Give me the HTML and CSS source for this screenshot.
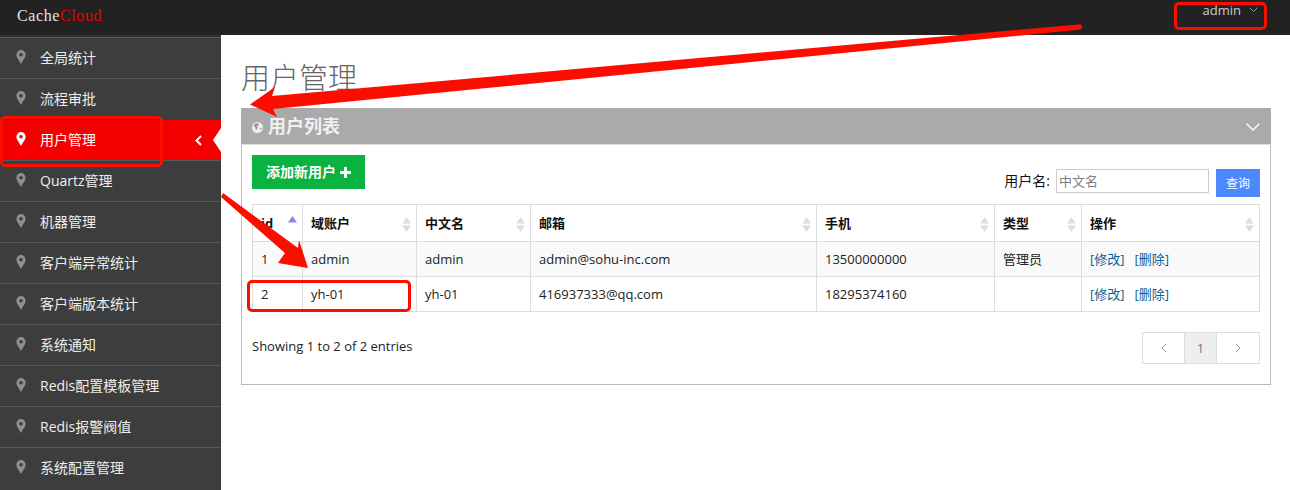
FILE: index.html
```html
<!DOCTYPE html>
<html lang="zh">
<head>
<meta charset="utf-8">
<title>CacheCloud</title>
<link rel="stylesheet" href="styles.css">
</head>
<body>
<svg width="0" height="0" class="defs"><defs>
  <symbol id="pin" viewBox="0 0 10 14"><path fill-rule="evenodd" d="M5 0a4.6 4.6 0 0 0-4.6 4.7C.4 7.6 3.6 11 5 14c1.400-3 4.600-6.400 4.600-9.300A4.600 4.600 0 0 0 5 0zm0 3a1.800 1.800 0 1 1 0 3.600A1.800 1.800 0 0 1 5 3z"/></symbol>
  <symbol id="sort" viewBox="0 0 9 15"><path d="M4.500 0 9 6.500H0zM4.500 15 0 8.500h9z"/></symbol>
</defs></svg>
<header class="topbar">
  <div class="logo">Cache<span class="logo-red">Cloud</span></div>
  <div class="user">admin <svg class="user-caret" width="9" height="6" viewBox="0 0 9 6"><path d="M.7.7 4.500 4.500 8.300.7" fill="none" stroke="#999" stroke-width="1"/></svg></div>
</header>
<div class="layout">
  <nav class="sidebar">
    <a class="nav-item"><svg class="pin"><use href="#pin"/></svg>全局统计</a>
    <a class="nav-item"><svg class="pin"><use href="#pin"/></svg>流程审批</a>
    <a class="nav-item active"><svg class="pin"><use href="#pin"/></svg>用户管理<svg class="nav-chev" width="7" height="11" viewBox="0 0 7 11"><path d="M6 1 1.500 5.500 6 10" fill="none" stroke="#fff" stroke-width="2"/></svg><span class="notch"></span></a>
    <a class="nav-item"><svg class="pin"><use href="#pin"/></svg>Quartz管理</a>
    <a class="nav-item"><svg class="pin"><use href="#pin"/></svg>机器管理</a>
    <a class="nav-item"><svg class="pin"><use href="#pin"/></svg>客户端异常统计</a>
    <a class="nav-item"><svg class="pin"><use href="#pin"/></svg>客户端版本统计</a>
    <a class="nav-item"><svg class="pin"><use href="#pin"/></svg>系统通知</a>
    <a class="nav-item"><svg class="pin"><use href="#pin"/></svg>Redis配置模板管理</a>
    <a class="nav-item"><svg class="pin"><use href="#pin"/></svg>Redis报警阀值</a>
    <a class="nav-item"><svg class="pin"><use href="#pin"/></svg>系统配置管理</a>
  </nav>
  <main class="content">
    <h1 class="page-title">用户管理</h1>
    <section class="panel">
      <div class="panel-head">
        <svg class="globe" width="11" height="11" viewBox="0 0 11 11"><circle cx="5.500" cy="5.500" r="5.500" fill="#eee"/><path d="M3 1.500 6 1l1 2-2 1 1 2-2 2-1-3-1.500-1zM8 6l2-.5-1.500 3z" fill="#9a9a9a"/></svg>
        <span class="panel-title">用户列表</span>
        <svg class="panel-chev" width="14" height="8" viewBox="0 0 14 8"><path d="M.7.7 7 7 13.300.7" fill="none" stroke="#fff" stroke-width="1.300"/></svg>
      </div>
      <div class="panel-body">
        <div class="toolbar">
          <a class="btn-add">添加新用户 <svg width="11" height="11" viewBox="0 0 11 11"><path d="M4 0h3v4h4v3H7v4H4V7H0V4h4z" fill="#fff"/></svg></a>
          <form class="search">
            <label class="search-label">用户名:</label>
            <input class="search-input" placeholder="中文名">
            <button class="search-btn" type="button">查询</button>
          </form>
        </div>
        <table class="grid">
          <colgroup>
            <col class="c1"><col class="c2"><col class="c3"><col class="c4"><col class="c5"><col class="c6"><col class="c7">
          </colgroup>
          <thead>
            <tr>
              <th>id<svg class="sort-up" width="9" height="7" viewBox="0 0 9 7"><path d="M4.500 0 9 6.500H0z"/></svg></th>
              <th>域账户<svg class="sort"><use href="#sort"/></svg></th>
              <th>中文名<svg class="sort"><use href="#sort"/></svg></th>
              <th>邮箱<svg class="sort"><use href="#sort"/></svg></th>
              <th>手机<svg class="sort"><use href="#sort"/></svg></th>
              <th>类型<svg class="sort"><use href="#sort"/></svg></th>
              <th>操作<svg class="sort"><use href="#sort"/></svg></th>
            </tr>
          </thead>
          <tbody>
            <tr class="odd">
              <td>1</td><td>admin</td><td>admin</td><td>admin@sohu-inc.com</td><td>13500000000</td><td>管理员</td>
              <td><a class="link">[修改]</a><a class="link">[删除]</a></td>
            </tr>
            <tr>
              <td>2</td><td>yh-01</td><td>yh-01</td><td>416937333@qq.com</td><td>18295374160</td><td></td>
              <td><a class="link">[修改]</a><a class="link">[删除]</a></td>
            </tr>
          </tbody>
        </table>
        <div class="footer-row">
          <div class="info">Showing 1 to 2 of 2 entries</div>
          <div class="pager">
            <span class="pg pg-edge pg-first"><svg width="6" height="10" viewBox="0 0 6 10"><path d="M5 1 1 5l4 4" fill="none" stroke="#999"/></svg></span>
            <span class="pg pg-cur">1</span>
            <span class="pg pg-edge"><svg width="6" height="10" viewBox="0 0 6 10"><path d="M1 1l4 4-4 4" fill="none" stroke="#999"/></svg></span>
          </div>
        </div>
      </div>
    </section>
  </main>
</div>
<div class="mark mark-nav"></div>
<div class="mark mark-row"></div>
<div class="mark mark-user"></div>
<svg class="arrows" width="1290" height="490" viewBox="0 0 1290 490">
  <path d="M1078 24.500 1081 24.500Q1083 27 1081 29.500L273 109 277 117 250 104.500 275 87 272 96z" fill="#fb0d00"/>
  <path d="M223 193 298 248 299 240 308 268 278 263 285 253 221 197z" fill="#fb0d00"/>
</svg>
</body>
</html>
```
FILE: styles.css
```css
* { box-sizing: border-box; }
html, body { margin: 0; padding: 0; }
body {
  width: 1290px;
  height: 490px;
  overflow: hidden;
  position: relative;
  background: #fff;
  color: #111;
  font: 13px/18px "Open Sans", "Noto Sans CJK SC", sans-serif;
}
.defs { position: absolute; }

.topbar {
  height: 35px;
  background: #222;
  display: flex;
  justify-content: space-between;
  padding: 5px 32px 0 17px;
}
.logo {
  font: 16px/21px "Liberation Serif", serif;
  letter-spacing: .6px;
  color: #e4e4e4;
}
.logo-red { color: #e60000; }
.user {
  color: #ccc;
  font-size: 13px;
  line-height: 10px;
  display: flex;
  gap: 8px;
  align-items: flex-start;
}
.user-caret { margin-top: 2px; }

.layout { display: flex; height: 455px; }
.sidebar {
  width: 221px;
  flex: none;
  background: #3d3d3d;
  padding-top: 2px;
  box-shadow: inset 0 2px 0 #333;
}
.nav-item {
  position: relative;
  height: 41px;
  display: flex;
  align-items: center;
  border-top: 1px solid #595959;
  padding: 0 0 0 16px;
  color: #eee;
  font-size: 14px;
}
.pin {
  width: 10px;
  height: 14px;
  margin-right: 14px;
  margin-top: -3px;
  fill: #8f8f8f;
}
.nav-item.active {
  background: #f50000;
  color: #fff;
  border-top-color: #3d3d3d;
}
.nav-item.active .pin { fill: #fff; }
.nav-chev { position: absolute; left: 195px; top: 15px; }
.notch {
  position: absolute;
  right: 0;
  top: 8px;
  border: 12px solid transparent;
  border-left: 0;
  border-right: 8px solid #fff;
}

.content { flex: 1; min-width: 0; padding: 0 19px 0 20px; }
.page-title {
  margin: 24px 0 0;
  height: 49px;
  font-size: 29px;
  line-height: 38px;
  font-weight: 300;
  color: #666;
}
.panel {
  border: 1px solid #bbb;
  border-top: 0;
  height: 277px;
}
.panel-head {
  height: 37px;
  margin: 0 -1px;
  background: #aaa;
  border-bottom: 1px solid #ddd;
  display: flex;
  align-items: center;
  padding: 0 11px;
  color: #fff;
}
.globe { margin-right: 5px; margin-top: 2px; }
.panel-title {
  font-size: 18px;
  font-weight: 700;
  line-height: 24px;
  color: #f0f0f0;
}
.panel-chev { margin-left: auto; margin-top: 2px; }
.panel-body { padding: 10px 10px 0; }

.toolbar {
  display: flex;
  justify-content: space-between;
  align-items: flex-start;
  height: 49px;
}
.btn-add {
  width: 113px;
  height: 34px;
  background: #0ab33f;
  color: #fff;
  font-size: 14px;
  font-weight: 700;
  display: flex;
  align-items: center;
  justify-content: center;
  gap: 4px;
}
.search {
  display: flex;
  align-items: flex-start;
  margin-top: 14px;
}
.search-label { font-size: 14px; line-height: 24px; margin-right: 6px; }
.search-input {
  width: 153px;
  height: 24px;
  border: 1px solid #ccc;
  padding: 0 2px;
  font: 13px "Open Sans", "Noto Sans CJK SC", sans-serif;
  outline: 0;
}
.search-input::placeholder { color: #808080; opacity: 1; }
.search-btn {
  width: 44px;
  height: 28px;
  margin-left: 7px;
  border: 0;
  padding: 0;
  background: #4d88ff;
  color: #fff;
  font: 12px "Open Sans", "Noto Sans CJK SC", sans-serif;
}

.grid {
  width: 1008px;
  table-layout: fixed;
  border-collapse: collapse;
  border: 1px solid #ddd;
}
.c1 { width: 50px; }
.c2, .c3 { width: 114px; }
.c4 { width: 286px; }
.c5 { width: 178px; }
.c6 { width: 87px; }
.c7 { width: 178px; }
.grid th, .grid td {
  border: 1px solid #ddd;
  text-align: left;
  padding: 0 8px;
  position: relative;
}
.grid th { height: 37px; font-weight: 700; color: #111; }
.grid td { height: 35px; color: #222; }
.grid .odd td { background: #f9f9f9; }
.sort {
  position: absolute;
  right: 5px;
  top: 12px;
  width: 9px;
  height: 15px;
  fill: #ddd;
}
.sort-up {
  position: absolute;
  right: 5px;
  top: 11px;
  fill: #8d86e6;
}
.link { color: #0a5f94; margin-right: 10px; }

.footer-row {
  display: flex;
  justify-content: space-between;
  padding-top: 20px;
}
.info { padding-top: 5px; color: #222; }
.pager {
  display: flex;
  height: 32px;
  border: 1px solid #ddd;
}
.pg {
  display: flex;
  align-items: center;
  justify-content: center;
}
.pg-edge { width: 42px; }
.pg-first { width: 41px; }
.pg-cur {
  width: 33px;
  background: #eee;
  border: solid #ddd;
  border-width: 0 1px;
  color: #777;
}

.mark {
  position: absolute;
  border: 3px solid #fb0d00;
  border-radius: 5px;
}
.mark-nav { left: 0; top: 116px; width: 163px; height: 51px; }
.mark-row { left: 247px; top: 280px; width: 164px; height: 32px; }
.mark-user { left: 1174px; top: 2px; width: 93px; height: 28px; }
.arrows { position: absolute; left: 0; top: 0; pointer-events: none; }
```
